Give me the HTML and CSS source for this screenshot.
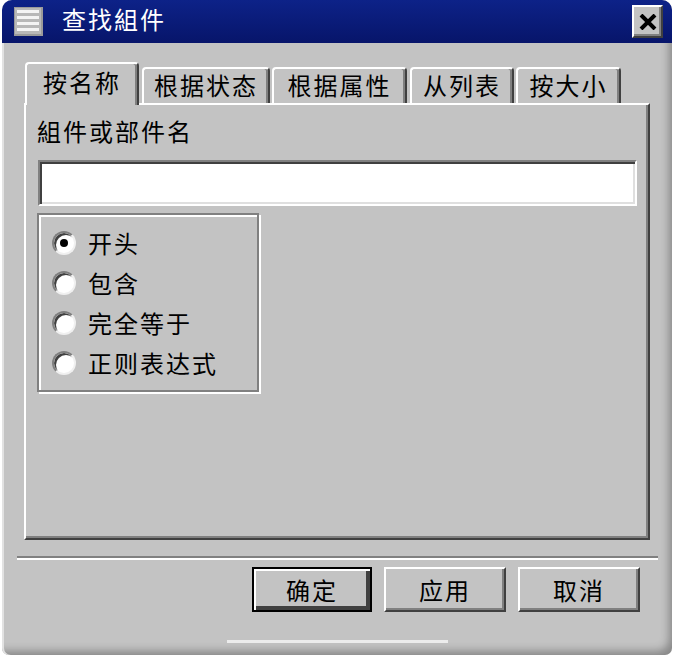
FILE: index.html
```html
<!DOCTYPE html>
<html lang="zh">
<head>
  <meta charset="UTF-8">
  <title>查找組件</title>
  <link rel="stylesheet" href="styles.css">
</head>
<body>

  <div class="window">
    <div class="titlebar">
      <svg class="app-icon" width="29" height="29" viewBox="0 0 29 29">
        <rect x="0" y="0" width="29" height="29" fill="#9a9a9a"/>
        <rect x="1" y="1" width="26" height="26" fill="#b8b8b8"/>
        <rect x="3" y="3" width="22" height="3" fill="#f4f4f4"/>
        <rect x="3" y="9" width="22" height="3" fill="#f4f4f4"/>
        <rect x="3" y="15" width="22" height="3" fill="#f4f4f4"/>
        <rect x="3" y="21" width="22" height="3" fill="#f4f4f4"/>
      </svg>
      <span class="title">查找組件</span>
      <div class="close-btn">
        <svg width="18" height="16" viewBox="0 0 18 16">
          <path d="M2 1 L16 15 M16 1 L2 15" stroke="#000" stroke-width="4" fill="none"/>
        </svg>
      </div>
    </div>

    <div class="dialog-body">
      <div class="tabs">
        <div class="tab active">按名称</div>
        <div class="tab">根据状态</div>
        <div class="tab">根据属性</div>
        <div class="tab">从列表</div>
        <div class="tab">按大小</div>
      </div>

      <div class="panel">
        <div class="field-label">組件或部件名</div>
        <div class="text-input"></div>

        <div class="match-group">
          <div class="radio-row"><span class="radio checked"></span>开头</div>
          <div class="radio-row"><span class="radio"></span>包含</div>
          <div class="radio-row"><span class="radio"></span>完全等于</div>
          <div class="radio-row"><span class="radio"></span>正则表达式</div>
        </div>
      </div>

      <div class="separator"></div>

      <div class="buttons">
        <div class="btn default">确定</div>
        <div class="btn">应用</div>
        <div class="btn">取消</div>
      </div>

      <div class="grip"></div>
    </div>
  </div>

</body>
</html>
```

FILE: styles.css
```css
body {
  margin: 0;
  background-color: #fff;
  font-family: "Noto Sans CJK SC", "Noto Sans CJK TC", sans-serif;
  font-size: 24px;
  letter-spacing: 2px;
  color: #000;
}

.window {
  margin-left: 2px;
  width: 670px;
  height: 655px;
  background-color: #c3c3c3;
  border-radius: 10px 10px 7px 7px;
  overflow: hidden;
  box-shadow: inset 2px 0 #e2e2e2, inset -8px -9px 9px -5px rgba(0, 0, 0, 0.3);
}

.titlebar {
  height: 43px;
  display: flex;
  align-items: center;
  padding: 0 9px 0 12px;
  background: linear-gradient(#0d2288, #07156a);
  box-sizing: border-box;
}

.app-icon {
  flex: none;
  margin-top: -1px;
}

.title {
  flex: 1;
  margin-left: 19px;
  margin-top: -6px;
  color: #fff;
  line-height: 30px;
}

.close-btn {
  width: 31px;
  height: 33px;
  box-sizing: border-box;
  display: flex;
  align-items: center;
  justify-content: center;
  background-color: #c3c3c3;
  border: 2px solid;
  border-color: #fff #404040 #404040 #fff;
  box-shadow: inset -2px -2px #808080;
}

.dialog-body {
  padding: 19px 0 0 22px;
}

/* tab strip */

.tabs {
  display: flex;
  align-items: flex-end;
  height: 41px;
  padding-left: 1px;
}

.tab {
  height: 36px;
  box-sizing: border-box;
  display: flex;
  align-items: center;
  justify-content: center;
  border: 2px solid;
  border-bottom: none;
  border-color: #fff #404040 #fff #fff;
  border-radius: 4px 4px 0 0;
  box-shadow: inset -2px 0 #808080;
  background-color: #c3c3c3;
  padding-bottom: 3px;
}

.tab.active {
  height: 43px;
  margin-bottom: -2px;
  position: relative;
  z-index: 1;
  padding-bottom: 7px;
}

.tab:nth-child(1) { width: 114px; }
.tab:nth-child(2) { width: 128px; margin-left: 3px; }
.tab:nth-child(3) { width: 135px; margin-left: 2px; }
.tab:nth-child(4) { width: 104px; margin-left: 3px; }
.tab:nth-child(5) { width: 105px; margin-left: 2px; }

/* page */

.panel {
  width: 626px;
  height: 437px;
  box-sizing: border-box;
  border: 2px solid;
  border-color: #fff #404040 #404040 #fff;
  box-shadow: inset -2px -2px #808080;
  padding: 12px 11px 0 12px;
}

.field-label {
  line-height: 28px;
  margin-left: -1px;
}

.text-input {
  margin-top: 15px;
  height: 46px;
  box-sizing: border-box;
  background-color: #fff;
  border: 2px solid;
  border-color: #808080 #fff #fff #808080;
  box-shadow: inset 2px 2px #404040, inset -2px -2px #dfdfdf;
}

.match-group {
  margin-top: 7px;
  margin-left: -1px;
  width: 222px;
  height: 179px;
  box-sizing: border-box;
  border: 2px solid #808080;
  box-shadow: inset 2px 2px #fff, 2px 2px #fff;
  padding: 8px 0 0 13px;
}

.radio-row {
  height: 40px;
  display: flex;
  align-items: center;
  line-height: 30px;
}

.radio {
  width: 24px;
  height: 24px;
  margin-right: 12px;
  box-sizing: border-box;
  border-radius: 50%;
  border: 2px solid;
  border-color: #808080 #f0f0f0 #f0f0f0 #808080;
  box-shadow: inset 2px 2px #404040;
  background-color: #fff;
  display: flex;
  align-items: center;
  justify-content: center;
}

.radio.checked::after {
  content: "";
  width: 8px;
  height: 8px;
  border-radius: 50%;
  background-color: #000;
}

/* bottom */

.separator {
  margin: 16px 0 0 -7px;
  width: 641px;
  height: 2px;
  background-color: #808080;
  border-bottom: 2px solid #fff;
}

.buttons {
  display: flex;
  gap: 12px;
  margin-top: 7px;
  padding-left: 228px;
}

.btn {
  width: 122px;
  height: 45px;
  box-sizing: border-box;
  display: flex;
  align-items: center;
  justify-content: center;
  border: 2px solid;
  border-color: #fff #404040 #404040 #fff;
  box-shadow: inset -2px -2px #808080;
  line-height: 30px;
}

.btn.default {
  width: 120px;
  border-color: #000;
  box-shadow: inset 2px 2px #fff, inset -4px -4px #404040;
}

.grip {
  margin: 28px 0 0 203px;
  width: 221px;
  height: 3px;
  background-color: #ececec;
}
```
